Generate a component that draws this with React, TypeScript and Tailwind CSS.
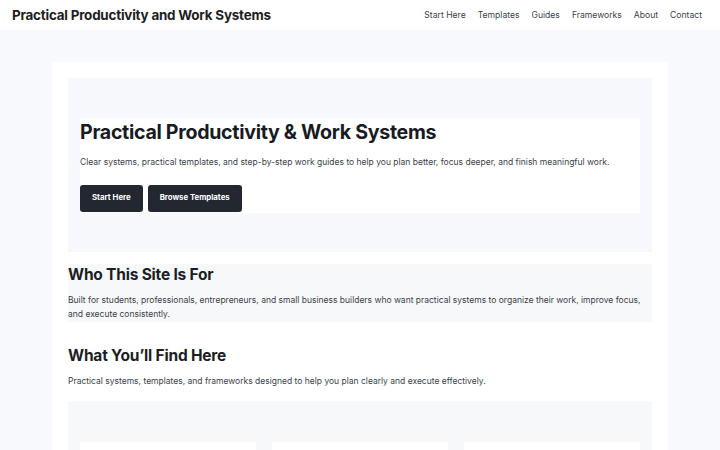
const nav = ["Start Here", "Templates", "Guides", "Frameworks", "About", "Contact"];

export default function App() {
  return (
    <div className="min-h-[450px] bg-[#f8f9fc] font-['Inter',sans-serif] text-[#1b1e24]">
      <header className="flex h-[30px] items-center justify-between bg-white px-3">
        <div className="text-[13.4px] font-bold tracking-[-0.2px]">
          Practical Productivity and Work Systems
        </div>
        <nav className="flex items-center gap-3 pr-[6px] text-[8.6px] text-[#3a3f49]">
          {nav.map((n) => (
            <a key={n} href="#">
              {n}
            </a>
          ))}
        </nav>
      </header>

      <main className="mx-[52px] mt-8 bg-white p-4 pb-0">
        <section className="flex h-[174px] flex-col justify-center bg-[#f7f8fc] px-3">
          <div className="bg-white pb-[1px]">
            <h1 className="text-[19.6px] font-bold leading-[28px] tracking-[-0.3px] text-[#181b22]">
              Practical Productivity &amp; Work Systems
            </h1>
            <p className="mt-[10px] text-[8.5px] leading-[12px] text-[#3a3f49]">
              Clear systems, practical templates, and step-by-step work guides to help you plan
              better, focus deeper, and finish meaningful work.
            </p>
            <div className="mt-[17px] flex gap-[5px]">
              <button className="h-[27px] rounded-[3px] bg-[#23272f] px-3 text-[7.8px] font-bold text-white">
                Start Here
              </button>
              <button className="h-[27px] rounded-[3px] bg-[#23272f] px-3 text-[7.8px] font-bold text-white">
                Browse Templates
              </button>
            </div>
          </div>
        </section>

        <section className="mt-3 bg-[#f7f8fa] pb-[1px]">
          <h2 className="text-[15.5px] font-bold leading-[22px] tracking-[-0.2px]">
            Who This Site Is For
          </h2>
          <p className="mt-[7px] text-[8.5px] leading-[14px] text-[#3a3f49]">
            Built for students, professionals, entrepreneurs, and small business builders who want
            practical systems to organize their work, improve focus, and execute consistently.
          </p>
        </section>

        <section className="mt-[23px]">
          <h2 className="text-[15.5px] font-bold leading-[22px] tracking-[-0.2px]">
            What You’ll Find Here
          </h2>
          <p className="mt-[7px] text-[8.5px] leading-[14px] text-[#3a3f49]">
            Practical systems, templates, and frameworks designed to help you plan clearly and
            execute effectively.
          </p>
          <div className="mt-[13px] grid grid-cols-3 gap-4 bg-[#f7f8fa] px-3 pt-[41px]">
            <div className="h-[80px] bg-white" />
            <div className="h-[80px] bg-white" />
            <div className="h-[80px] bg-white" />
          </div>
        </section>
      </main>
    </div>
  );
}
